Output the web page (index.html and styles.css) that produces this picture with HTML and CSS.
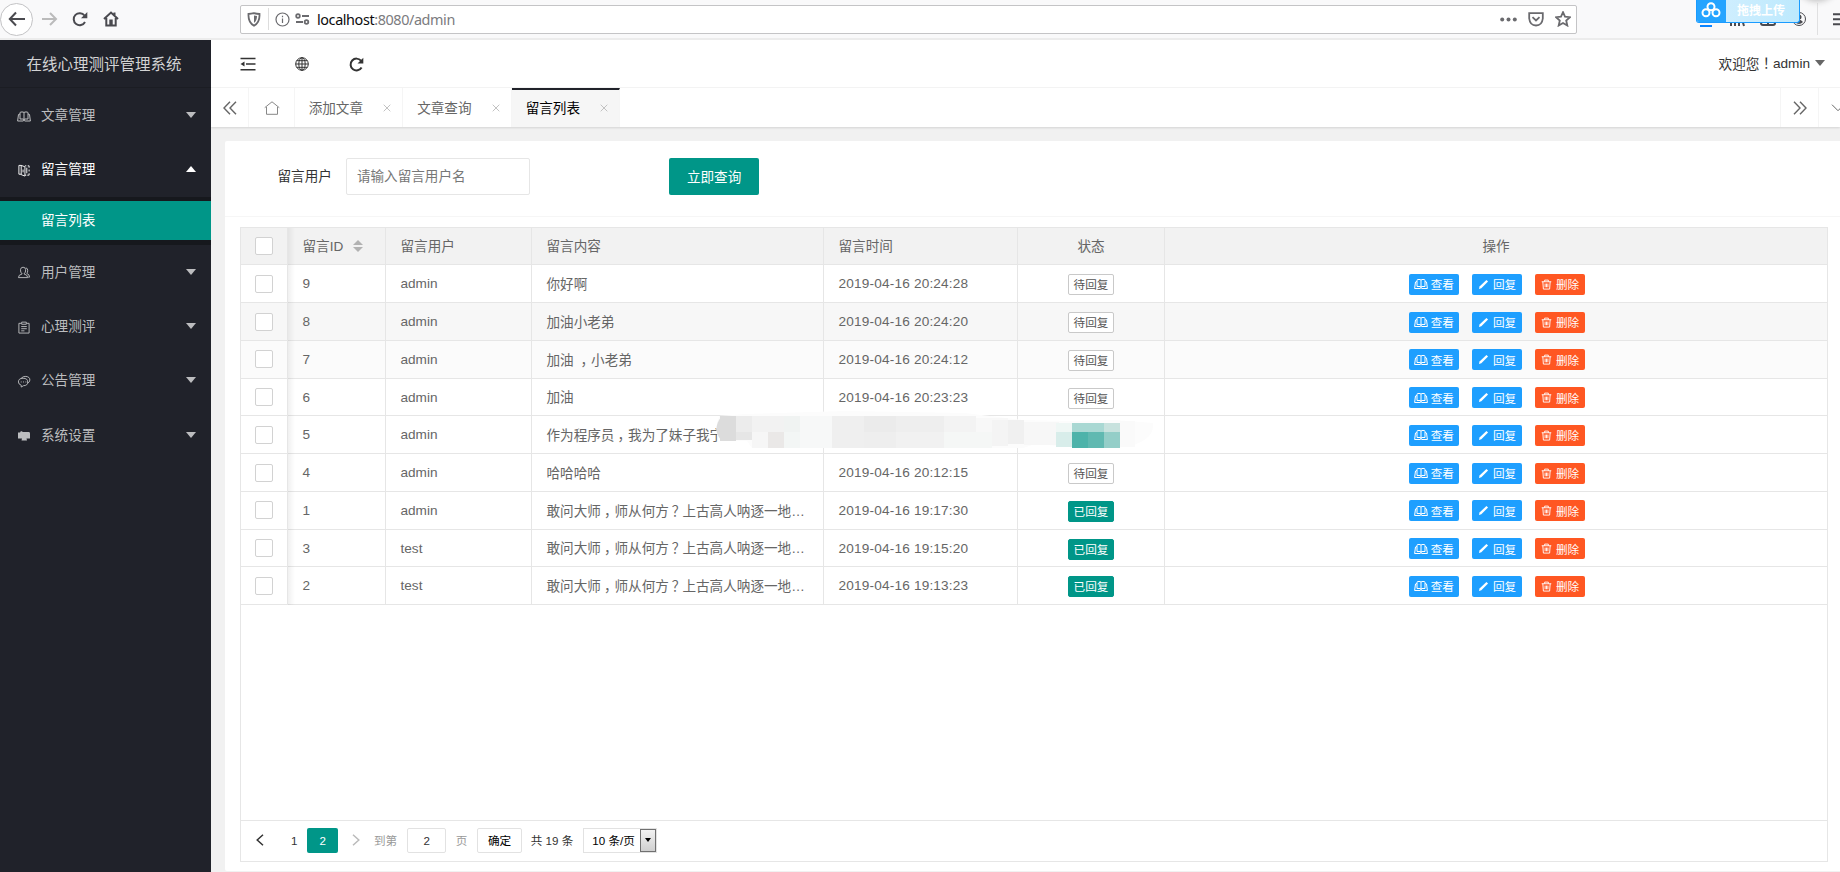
FILE: index.html
```
<!DOCTYPE html>
<html lang="zh-CN">

<head>
    <meta charset="UTF-8">
    <title>在线心理测评管理系统</title>
    <link rel="stylesheet" href="styles.css">
</head>

<body>
<svg class="symbols">
    <symbol id="i-book" viewBox="0 0 14 12"><path d="M3 8.500V2.500Q3 1.500 4 1.500H6Q7 1.500 7 2.500Q7 1.500 8 1.500H10Q11 1.500 11 2.500V8.500M7 2.500V9.500M3 8.500H6Q7 8.500 7 9.500Q7 8.500 8 8.500H11M3 3.500L1.500 4L.6 10.500H6L7 9.800L8 10.500H13.400L12.500 4L11 3.500"/></symbol>
    <symbol id="i-msg" viewBox="0 0 14 14"><path d="M4 1.500H1.500V11H4M4 1.500L8 3V13L4 11.500ZM8 2H9.500M11 2H12.500V4M12.500 6V8M12.500 10V12H10.500M8 12H9.500M10 4V10M6 6V9"/></symbol>
    <symbol id="i-user" viewBox="0 0 14 14"><path d="M5 8.500Q3 7 3.200 4Q3.500 1.300 6 1.300Q8.600 1.300 8.800 4Q9 7 7 8.500Q11 9.500 11 12.500H1Q1 9.500 5 8.500ZM9 2Q11.300 2.500 11 5Q11 7 10 8Q13 9 13 12H11.500"/></symbol>
    <symbol id="i-form" viewBox="0 0 14 14"><path d="M4 2.500H1.500V13H12.500V2.500H10M4.500 1.200H9.500V3.500H4.500ZM4 6H10M4 8.300H10M4 10.600H7.500"/></symbol>
    <symbol id="i-chat" viewBox="0 0 14 14"><path d="M6 3.500Q11 3.500 11 7.500Q11 11.500 6.500 11.500L4 13V11Q1 10 1 7.500Q1 3.500 6 3.500ZM4 3.500Q6 1.300 9 1.500Q13.500 2 13.300 5.500Q13.200 7.500 11 9M3.500 7.500H4.500M6 7.500H7M8.500 7.500H9.500"/></symbol>
    <symbol id="i-set" viewBox="0 0 14 12"><path class="solid" d="M1 3H3L4 1.500L6 2.500H12Q13 2.500 13 4V9H9.500L10 11H4.500L5 9H1Z"/></symbol>
    <symbol id="i-pen" viewBox="0 0 12 12"><path class="solid" d="M1 11L1.700 8.300L9.200 1L11 2.700L3.600 10.200Z"/></symbol>
    <symbol id="i-del" viewBox="0 0 12 12"><path d="M.8 3H11.200M4 3V1.200H8V3M2 3L2.600 11H9.400L10 3M4.500 5V9M6 5V9M7.500 5V9"/></symbol>
    <symbol id="i-x" viewBox="0 0 8 8"><path d="M.7.700L7.300 7.300M7.300.700L.7 7.300"/></symbol>
</svg>

<!-- browser bar -->
<div class="browser">
    <div class="nav-back"><svg width="18" height="16" viewBox="0 0 18 16"><path d="M17 8H2M8 1.500L1.800 8L8 14.500"/></svg></div>
    <svg class="nav-next" width="17" height="16" viewBox="0 0 17 16"><path d="M1 8H15M9 2L15 8L9 14"/></svg>
    <svg class="nav-reload" width="16" height="16" viewBox="0 0 16 16"><path d="M13 11A6 6 0 1 1 12.500 4.500"/><path class="solid" d="M15.300 1V7.200H9Z"/></svg>
    <svg class="nav-home" width="16" height="16" viewBox="0 0 16 16"><path d="M1 8L8 1.500L15 8M3.300 7V14.500H12.700V7M11.500 4V1.500"/><path class="solid" d="M6.300 8.500H9.700V14H6.300Z"/></svg>
    <div class="url">
        <svg class="shield" width="14" height="15" viewBox="0 0 14 15"><path d="M7 1.200Q10 2 12.500 2Q13 10.500 7 13.700Q1 10.500 1.500 2Q4 2 7 1.200Z"/><path class="solid" d="M7 3.500V11Q10 8.500 10 4Z"/></svg>
        <i class="url-line"></i>
        <svg class="info" width="15" height="15" viewBox="0 0 15 15"><circle cx="7.500" cy="7.500" r="6.500"/><path d="M7.500 6.500V11M7.500 3.800V5.200"/></svg>
        <svg class="perm" width="15" height="12" viewBox="0 0 15 12"><circle cx="3" cy="3" r="1.800"/><path d="M7 3H14M1 9H8"/><circle cx="11.500" cy="9" r="1.800"/></svg>
        <span class="url-text">localhost<em>:8080/admin</em></span>
        <svg class="dots" width="17" height="5" viewBox="0 0 17 5"><circle cx="2.200" cy="2.500" r="2"/><circle cx="8.500" cy="2.500" r="2"/><circle cx="14.800" cy="2.500" r="2"/></svg>
        <svg class="pocket" width="16" height="15" viewBox="0 0 16 15"><path d="M1.200 1.200H14.800V6.500Q14 13.500 8 13.500Q2 13.500 1.200 6.500ZM4.500 5.200L8 8.500L11.500 5.200"/></svg>
        <svg class="star" width="16" height="16" viewBox="0 0 16 16"><path d="M8 1.200L10 5.700L14.900 6.200L11.200 9.500L12.300 14.500L8 12L3.700 14.500L4.800 9.500L1.100 6.200L6 5.700Z"/></svg>
    </div>
    <svg class="tools" width="140" height="39" viewBox="0 0 140 39">
        <path class="dl" d="M0 26H12"/>
        <path d="M31 14V26M35 14V26M39 14V26M41 16L44 26M61 14V23Q61 25 63 25H73Q75 25 75 23V14M68 14V25"/>
        <circle class="thin" cx="99" cy="19" r="6.500"/><path class="solid" d="M95 22Q99 17 103 22Q99 26 95 22Z"/><circle class="solid" cx="99" cy="17" r="2.500"/>
        <path class="sep" d="M117.500 3V35"/>
        <path d="M133 14.300H140M133 19.300H140M133 24.300H140"/>
    </svg>
    <div class="ball"></div>
    <div class="upload">
        <span class="upload-logo"><svg width="20" height="16" viewBox="0 0 20 16"><circle cx="10" cy="4.800" r="3.500"/><circle cx="5" cy="10.800" r="3.500"/><circle cx="15" cy="10.800" r="3.500"/></svg></span>
        <span class="upload-text">拖拽上传</span>
    </div>
</div>

<div class="layout">
    <div class="side">
        <div class="logo">在线心理测评管理系统</div>
        <div class="menu"><svg><use href="#i-book"/></svg><span>文章管理</span><i class="more"></i></div>
        <div class="menu open"><svg><use href="#i-msg"/></svg><span>留言管理</span><i class="more"></i></div>
        <div class="child"><a>留言列表</a></div>
        <div class="menu"><svg><use href="#i-user"/></svg><span>用户管理</span><i class="more"></i></div>
        <div class="menu"><svg><use href="#i-form"/></svg><span>心理测评</span><i class="more"></i></div>
        <div class="menu"><svg><use href="#i-chat"/></svg><span>公告管理</span><i class="more"></i></div>
        <div class="menu"><svg><use href="#i-set"/></svg><span>系统设置</span><i class="more"></i></div>
    </div>

    <div class="main">
        <div class="header">
            <svg width="16" height="14" viewBox="0 0 16 14"><path d="M.5 1.500H15.500M6 7H15.500M.5 12.700H15.500"/><path class="solid" d="M.5 7L4.500 4.500V9.500Z"/></svg>
            <svg class="globe" width="14" height="14" viewBox="0 0 14 14"><circle cx="7" cy="7" r="6.300"/><ellipse cx="7" cy="7" rx="3.200" ry="6.300"/><path d="M7 .7V13.300M.7 7H13.300M1.700 3.700H12.300M1.700 10.300H12.300"/></svg>
            <svg class="refresh" width="15" height="15" viewBox="0 0 15 15"><path d="M12.600 10.500A5.900 5.900 0 1 1 12 3.700"/><path class="solid" d="M14.300.8V6.500H8.500Z"/></svg>
            <div class="welcome">欢迎您<span class="tc">！</span>admin<i class="more"></i></div>
        </div>

        <div class="tabs">
            <div class="tab-ctrl"><svg width="14" height="14" viewBox="0 0 14 14"><path d="M7 .7L1 7L7 13.300M13 .7L7 7L13 13.300"/></svg></div>
            <div class="tab-home"><svg width="16" height="14" viewBox="0 0 16 14"><path d="M.7 6.700L8 .8L15.300 6.700M2.500 6V13.300H13.500V6"/></svg></div>
            <div class="tab">添加文章<svg><use href="#i-x"/></svg></div>
            <div class="tab">文章查询<svg><use href="#i-x"/></svg></div>
            <div class="tab active">留言列表<svg><use href="#i-x"/></svg></div>
            <div class="tab-ctrl right"><svg width="14" height="14" viewBox="0 0 14 14"><path d="M1 .7L7 7L1 13.300M7 .7L13 7L7 13.300"/></svg></div>
            <div class="tab-down"><svg width="14" height="8" viewBox="0 0 14 8"><path d="M1 .7L7 6.700L13 .7"/></svg></div>
        </div>

        <div class="card">
            <div class="search">
                <label>留言用户</label>
                <input type="text" placeholder="请输入留言用户名">
                <button type="button">立即查询</button>
            </div>

            <div class="table">
                <div class="row head">
                    <div class="cell check"><i></i></div>
                    <div class="cell"><p>留言ID</p><span class="sort"><i></i><i></i></span></div>
                    <div class="cell"><p>留言用户</p></div>
                    <div class="cell"><p>留言内容</p></div>
                    <div class="cell"><p>留言时间</p></div>
                    <div class="cell center"><p>状态</p></div>
                    <div class="cell center"><p>操作</p></div>
                </div>
                <div id="rows"></div>
                <div class="fixed-shadow"></div>
                <!-- pixelated smear over the fifth row -->
                <svg class="mosaic" width="442" height="40" viewBox="0 0 442 40" id="mosaic"></svg>
                <div class="page">
                    <svg class="prev" width="8" height="12" viewBox="0 0 8 12"><path d="M7 .7L1.200 6L7 11.300"/></svg>
                    <span class="num">1</span>
                    <span class="curr">2</span>
                    <svg class="next" width="8" height="12" viewBox="0 0 8 12"><path d="M1 .7L6.800 6L1 11.300"/></svg>
                    <span class="grey">到第</span>
                    <span class="skip">2</span>
                    <span class="grey">页</span>
                    <span class="ok">确定</span>
                    <span class="count">共 19 条</span>
                    <span class="limit">10 条/页<b><i></i></b></span>
                </div>
            </div>
        </div>
    </div>
</div>

<script>
    const ask = '敢问大师<span class="mark">，</span>师从何方<span class="mark">？</span>上古高人呐逐一地…';
    const list = [
        [9, 'admin', '你好啊', '2019-04-16 20:24:28', 0],
        [8, 'admin', '加油小老弟', '2019-04-16 20:24:20', 0],
        [7, 'admin', '加油 <span class="mark">，</span>小老弟', '2019-04-16 20:24:12', 0],
        [6, 'admin', '加油', '2019-04-16 20:23:23', 0],
        [5, 'admin', '作为程序员<span class="mark">，</span>我为了妹子我宁', '', -1],
        [4, 'admin', '哈哈哈哈', '2019-04-16 20:12:15', 0],
        [1, 'admin', ask, '2019-04-16 19:17:30', 1],
        [3, 'test', ask, '2019-04-16 19:15:20', 1],
        [2, 'test', ask, '2019-04-16 19:13:23', 1]
    ];

    function status(s) {
        if (s < 0) return '';
        return s ? '<span class="badge done">已回复</span>' : '<span class="badge">待回复</span>';
    }

    const rows = document.getElementById('rows');
    for (const m of list) {
        rows.innerHTML += `
        <div class="row">
            <div class="cell check"><i></i></div>
            <div class="cell">${m[0]}</div>
            <div class="cell">${m[1]}</div>
            <div class="cell"><p>${m[2]}</p></div>
            <div class="cell time">${m[3]}</div>
            <div class="cell center">${status(m[4])}</div>
            <div class="cell center tools-cell">
                <a class="btn"><svg class="wide"><use href="#i-book"/></svg>查看</a>
                <a class="btn"><svg><use href="#i-pen"/></svg>回复</a>
                <a class="btn danger"><svg><use href="#i-del"/></svg>删除</a>
            </div>
        </div>`;
    }

    // [x, y, width, height, color]
    const blocks = [
        [5, 5, 16, 25, '#dcdcdc'], [21, 5, 16, 16, '#ececec'], [37, 5, 32, 16, '#f2f2f2'], [69, 5, 16, 16, '#f0f3f2'],
        [21, 21, 16, 8, '#e6e6e6'], [37, 21, 16, 16, '#f6f6f6'], [53, 21, 16, 16, '#eae8e7'], [69, 21, 16, 16, '#f3f6f5'],
        [85, 5, 32, 32, '#f7f8f8'], [117, 5, 32, 32, '#efefef'], [149, 5, 32, 16, '#ebebeb'], [149, 21, 32, 16, '#eeeeee'],
        [181, 5, 48, 16, '#eeeeee'], [181, 21, 48, 16, '#f1f1f1'], [229, 5, 32, 16, '#f3f3f3'], [229, 21, 48, 16, '#f5f7f6'],
        [261, 7, 32, 14, '#f8f8f8'], [277, 9, 16, 26, '#f4f4f4'], [293, 9, 16, 24, '#f0f0f0'], [309, 11, 35, 23, '#f7f7f7'],
        [341, 12, 16, 9, '#eff7f5'], [341, 21, 16, 15, '#d8edea'], [357, 12, 32, 9, '#a9d8d3'], [389, 12, 16, 9, '#c8e2de'],
        [357, 21, 16, 16, '#4db3aa'], [373, 21, 16, 16, '#60b9b1'], [389, 21, 16, 16, '#94cec8'], [405, 10, 15, 26, '#fafafa']
    ];
    let shapes = '<path fill="#fcfcfc" d="M4 5Q-2 22 6 30H32L37 37H308L320 33L356 36H410Q440 30 438 12L400 9L356 10L308 9L250 2L130 0L30 3Z"/>';
    shapes += '<path fill="#dcdcdc" d="M6 6Q-3 18 6 29Z"/>';
    for (const b of blocks) {
        shapes += `<rect x="${b[0]}" y="${b[1]}" width="${b[2]}" height="${b[3]}" fill="${b[4]}"/>`;
    }
    document.getElementById('mosaic').innerHTML = shapes;
</script>
</body>

</html>
```
FILE: styles.css
```
* {
    box-sizing: border-box;
}

body {
    margin: 0;
    height: 872px;
    overflow: hidden;
    font: 13.6px "Liberation Sans", "Noto Sans CJK SC", sans-serif;
    color: #666;
    background: #f1f1f1;
}

i, em {
    font-style: normal;
}

svg {
    display: block;
    flex: none;
    fill: none;
    stroke: currentColor;
    stroke-width: 1;
}

.solid {
    fill: currentColor;
    stroke: none;
}

.symbols {
    position: absolute;
    width: 0;
    height: 0;
}

/* full-width marks sit in the middle of their box */
.tc {
    font-family: "Noto Sans CJK TC", sans-serif;
    line-height: 1;
}

.mark {
    margin: 0 -3px 0 3px;
}

/* browser bar */
.browser {
    position: relative;
    display: flex;
    align-items: center;
    height: 40px;
    background: #f9f9fa;
    border-bottom: 2px solid #ececec;
    color: #4a4a4f;
    overflow: hidden;
}

.browser svg {
    stroke-width: 2;
}

.nav-back {
    width: 33px;
    height: 33px;
    border: 1px solid #c3c3c5;
    border-radius: 50%;
    background: #fff;
    display: flex;
    align-items: center;
    justify-content: center;
}

.nav-next {
    margin-left: 8px;
    color: #bbb;
}

.nav-reload {
    margin-left: 14px;
}

.nav-home {
    margin-left: 15px;
}

.url {
    display: flex;
    align-items: center;
    width: 1337px;
    height: 29px;
    margin-left: 121px;
    padding: 0 5px 0 6px;
    border: 1px solid #c4c4c6;
    border-radius: 2px;
    background: #fff;
    color: #6a6a6e;
}

.browser .url svg {
    stroke-width: 1.8;
}

.url-line {
    width: 1px;
    height: 22px;
    margin: 0 6px 0 7px;
    background: #ddd;
}

.browser .url .info {
    stroke-width: 1.2;
}

.perm {
    margin: 0 7px 0 5px;
}

.url-text {
    flex: 1;
    font: 14.4px "Noto Sans", sans-serif;
    letter-spacing: -0.4px;
    color: #0c0c0d;
}

.url-text em {
    color: #7b7b7e;
}

.browser .url .dots {
    fill: currentColor;
    stroke: none;
}

.pocket {
    margin: 0 11px 0 11px;
}

.tools {
    margin-left: 123px;
}

.dl {
    stroke: #0a84ff;
}

.browser .thin {
    stroke-width: 1;
}

.sep {
    stroke: #e0e0e1;
    stroke-width: 1;
}

.ball {
    position: absolute;
    top: -38px;
    right: 3px;
    width: 40px;
    height: 38px;
    border-radius: 50%;
    box-shadow: 0 0 6px 1px #bbb;
}

.upload {
    position: absolute;
    left: 1696px;
    top: 0;
    display: flex;
    width: 104px;
    height: 23px;
    border: 1px solid #1a9bff;
    border-top: 0;
    border-radius: 0 0 3px 3px;
    background: linear-gradient(to right, #d5f0ff, #bde9fd);
    overflow: hidden;
}

.upload-logo {
    width: 29px;
    height: 23px;
    padding: 2px 0 0 4px;
    background: #25a4ff;
    color: #fff;
}

.upload-text {
    padding-left: 11px;
    font-size: 12px;
    font-weight: bold;
    line-height: 22px;
    color: #fff;
}

.layout {
    display: flex;
    height: 832px;
}

/* sidebar */
.side {
    width: 211px;
    flex: none;
    background: #20222a;
    color: #bcbdbf;
}

.logo {
    height: 48px;
    padding-right: 3px;
    line-height: 49px;
    text-align: center;
    font-size: 15.5px;
    color: #d2d3d4;
    border-bottom: 1px solid #1b1d23;
}

.menu {
    display: flex;
    align-items: center;
    height: 54.3px;
    padding: 0 15px 0 17px;
}

.menu span {
    padding-bottom: 2px;
}

.menu svg {
    width: 14px;
    height: 13px;
    margin: 2px 10px 0 0;
}

.open {
    color: #fff;
}

.more {
    margin-left: auto;
    border: 5.8px solid transparent;
    border-top: 6px solid currentColor;
    border-bottom: 0;
}

.open .more {
    border-top: 0;
    border-bottom: 6px solid currentColor;
}

.child {
    padding: 4.5px 0;
    background: #16181d;
}

.child a {
    display: block;
    height: 39px;
    padding-left: 41px;
    line-height: 40px;
    background: #009688;
    color: #fff;
}

/* top header and tabs */
.main {
    flex: 1;
    min-width: 0;
    overflow: hidden;
}

.header {
    display: flex;
    align-items: center;
    height: 48px;
    padding: 0 15px 0 28.500px;
    background: #fff;
    border-bottom: 1px solid #f5f5f5;
    color: #333;
}

.header svg {
    margin-right: 39.500px;
    stroke-width: 1.6;
    margin-top: 1.500px;
}

.header .globe {
    margin-right: 40px;
    stroke-width: 1;
}

.header .refresh {
    stroke-width: 2;
}

.welcome {
    display: flex;
    align-items: center;
    margin-left: auto;
    padding-bottom: 1px;
}

.welcome .more {
    margin-left: 5px;
    color: #666;
}

.tabs {
    position: relative;
    display: flex;
    height: 39px;
    background: #fff;
    box-shadow: 0 1px 2px rgba(0, 0, 0, .12);
    color: #666;
}

.tabs > div {
    display: flex;
    align-items: center;
    justify-content: center;
    flex: none;
    border-right: 1px solid #f5f5f5;
}

.tabs .tab-ctrl {
    width: 38px;
}

.tab-ctrl svg {
    stroke-width: 1.4;
}

.tabs .tab-home {
    width: 45.7px;
    padding-left: 1px;
    color: #888;
}

.tabs .tab {
    width: 108.5px;
    justify-content: flex-start;
    padding: 0 0 2px 14px;
}

.tab svg {
    width: 8px;
    height: 8px;
    margin: 2px 0 0 20px;
    color: #c2c2c2;
}

.tabs .active {
    border-top: 2px solid #20222a;
    padding-bottom: 4px;
    background: #f6f6f6;
    color: #000;
}

.tabs .right {
    width: 39px;
    margin-left: auto;
    border-left: 1px solid #f5f5f5;
}

.tabs .tab-down {
    width: 21px;
    padding-left: 12px;
    justify-content: flex-start;
    border: 0;
    overflow: hidden;
}

/* card */
.card {
    margin: 14px 0 0 14px;
    height: 730px;
    background: #fff;
    border-radius: 2px 0 0 2px;
}

.search {
    display: flex;
    align-items: center;
    height: 76px;
    padding: 0 0 5px 52.5px;
    border-bottom: 1px solid #f6f6f6;
    color: #333;
}

.search label {
    padding-bottom: 2px;
}

.search input {
    width: 184px;
    height: 37px;
    margin: 0 139px 0 14.5px;
    padding: 0 0 0 9.500px;
    border: 1px solid #e6e6e6;
    border-radius: 2px;
    font: inherit;
}

.search input::placeholder {
    color: #777;
}

.search button {
    width: 89.500px;
    height: 37px;
    margin-top: 1.500px;
    padding: 0 0 2px;
    border: 0;
    border-radius: 2px;
    background: #009688;
    color: #fff;
    font: inherit;
}

.table {
    position: relative;
    display: flex;
    flex-direction: column;
    width: 1588px;
    height: 635.500px;
    margin: 9.600px 0 0 15px;
    border: 1px solid #e6e6e6;
}

.row {
    display: grid;
    grid-template-columns: 47px 98px 146px 292px 194px 147px 1fr;
    height: 37.77px;
    border-bottom: 1px solid #e6e6e6;
}

.head {
    background: #f2f2f2;
}

#rows .row:nth-child(2) {
    background: #f7f7f7;
}

#rows .row:nth-child(3) {
    background: #fbfbfb;
}

.cell {
    display: flex;
    align-items: center;
    padding-left: 14.5px;
    border-right: 1px solid #e6e6e6;
    white-space: nowrap;
    overflow: hidden;
}

.cell:last-child {
    border-right: 0;
}

.cell p {
    margin: 0;
    padding-bottom: 1.500px;
}

.time {
    letter-spacing: .19px;
}

.cell.center {
    justify-content: center;
    padding: 0;
}

.cell.check {
    padding-left: 14px;
}

.check i {
    width: 18px;
    height: 18px;
    border: 1px solid #d2d2d2;
    border-radius: 2px;
    background: #fff;
}

.sort {
    display: flex;
    flex-direction: column;
    gap: 2px;
    margin-left: 9.500px;
}

.sort i {
    border: 5px solid transparent;
    border-top: 0;
    border-bottom-color: #b2b2b2;
}

.sort i + i {
    border-top: 5px solid #b2b2b2;
    border-bottom: 0;
}

.fixed-shadow {
    position: absolute;
    left: 47px;
    top: 0;
    width: 7px;
    height: 377px;
    background: linear-gradient(to right, rgba(0, 0, 0, .06), transparent);
}

.badge {
    height: 21px;
    margin-top: 2px;
    padding: 0 4.500px;
    border: 1px solid #c9c9c9;
    border-radius: 2px;
    background: #fff;
    font-size: 11.6px;
    line-height: 19px;
    color: #555;
}

.done {
    border-color: #009688;
    background: #009688;
    color: #fff;
}

.cell.tools-cell {
    padding-left: 2px;
}

.btn {
    display: flex;
    align-items: center;
    justify-content: center;
    width: 49.500px;
    height: 21px;
    margin: 1px 6.750px 0;
    border-radius: 2px;
    background: #1e9fff;
    color: #fff;
    font-size: 11.6px;
}

.btn svg {
    width: 11px;
    height: 11px;
    margin-right: 4px;
}

.btn .wide {
    width: 14px;
    height: 12px;
    margin-right: 2.500px;
}

.danger {
    background: #ff5722;
}

.mosaic {
    position: absolute;
    left: 474px;
    top: 183px;
    stroke: none;
}

/* pagination */
.page {
    display: flex;
    align-items: center;
    height: 41.500px;
    margin-top: auto;
    padding-left: 15px;
    padding-bottom: 1px;
    border-top: 1px solid #e6e6e6;
    font-size: 11.6px;
    color: #333;
}

.page svg {
    stroke-width: 1.5;
}

.num {
    margin-left: 27px;
}

.curr {
    width: 30.500px;
    height: 25px;
    margin-left: 10px;
    border-radius: 2px;
    background: #009688;
    color: #fff;
    line-height: 25px;
    text-align: center;
}

.next {
    margin: 0 14px 0 14px;
    color: #bbb;
}

.grey {
    color: #999;
}

.skip {
    width: 39px;
    height: 25px;
    margin: 0 9.500px 0 10px;
    border: 1px solid #e2e2e2;
    border-radius: 2px;
    line-height: 23px;
    text-align: center;
}

.ok {
    width: 44.500px;
    height: 25px;
    margin: 0 9px 0 10px;
    border: 1px solid #e2e2e2;
    border-radius: 2px;
    line-height: 23px;
    text-align: center;
    color: #000;
}

.limit {
    display: flex;
    justify-content: space-between;
    width: 74px;
    height: 25px;
    margin-left: 10px;
    padding-left: 8px;
    border: 1px solid #e2e2e2;
    line-height: 24px;
    color: #000;
}

.limit b {
    display: flex;
    align-items: center;
    justify-content: center;
    width: 16px;
    height: 23px;
    border: 1px solid #707070;
    background: linear-gradient(#f2f2f2, #cfcfcf);
}

.limit b i {
    border: 3.500px solid transparent;
    border-top: 4px solid #000;
    border-bottom: 0;
}
```
